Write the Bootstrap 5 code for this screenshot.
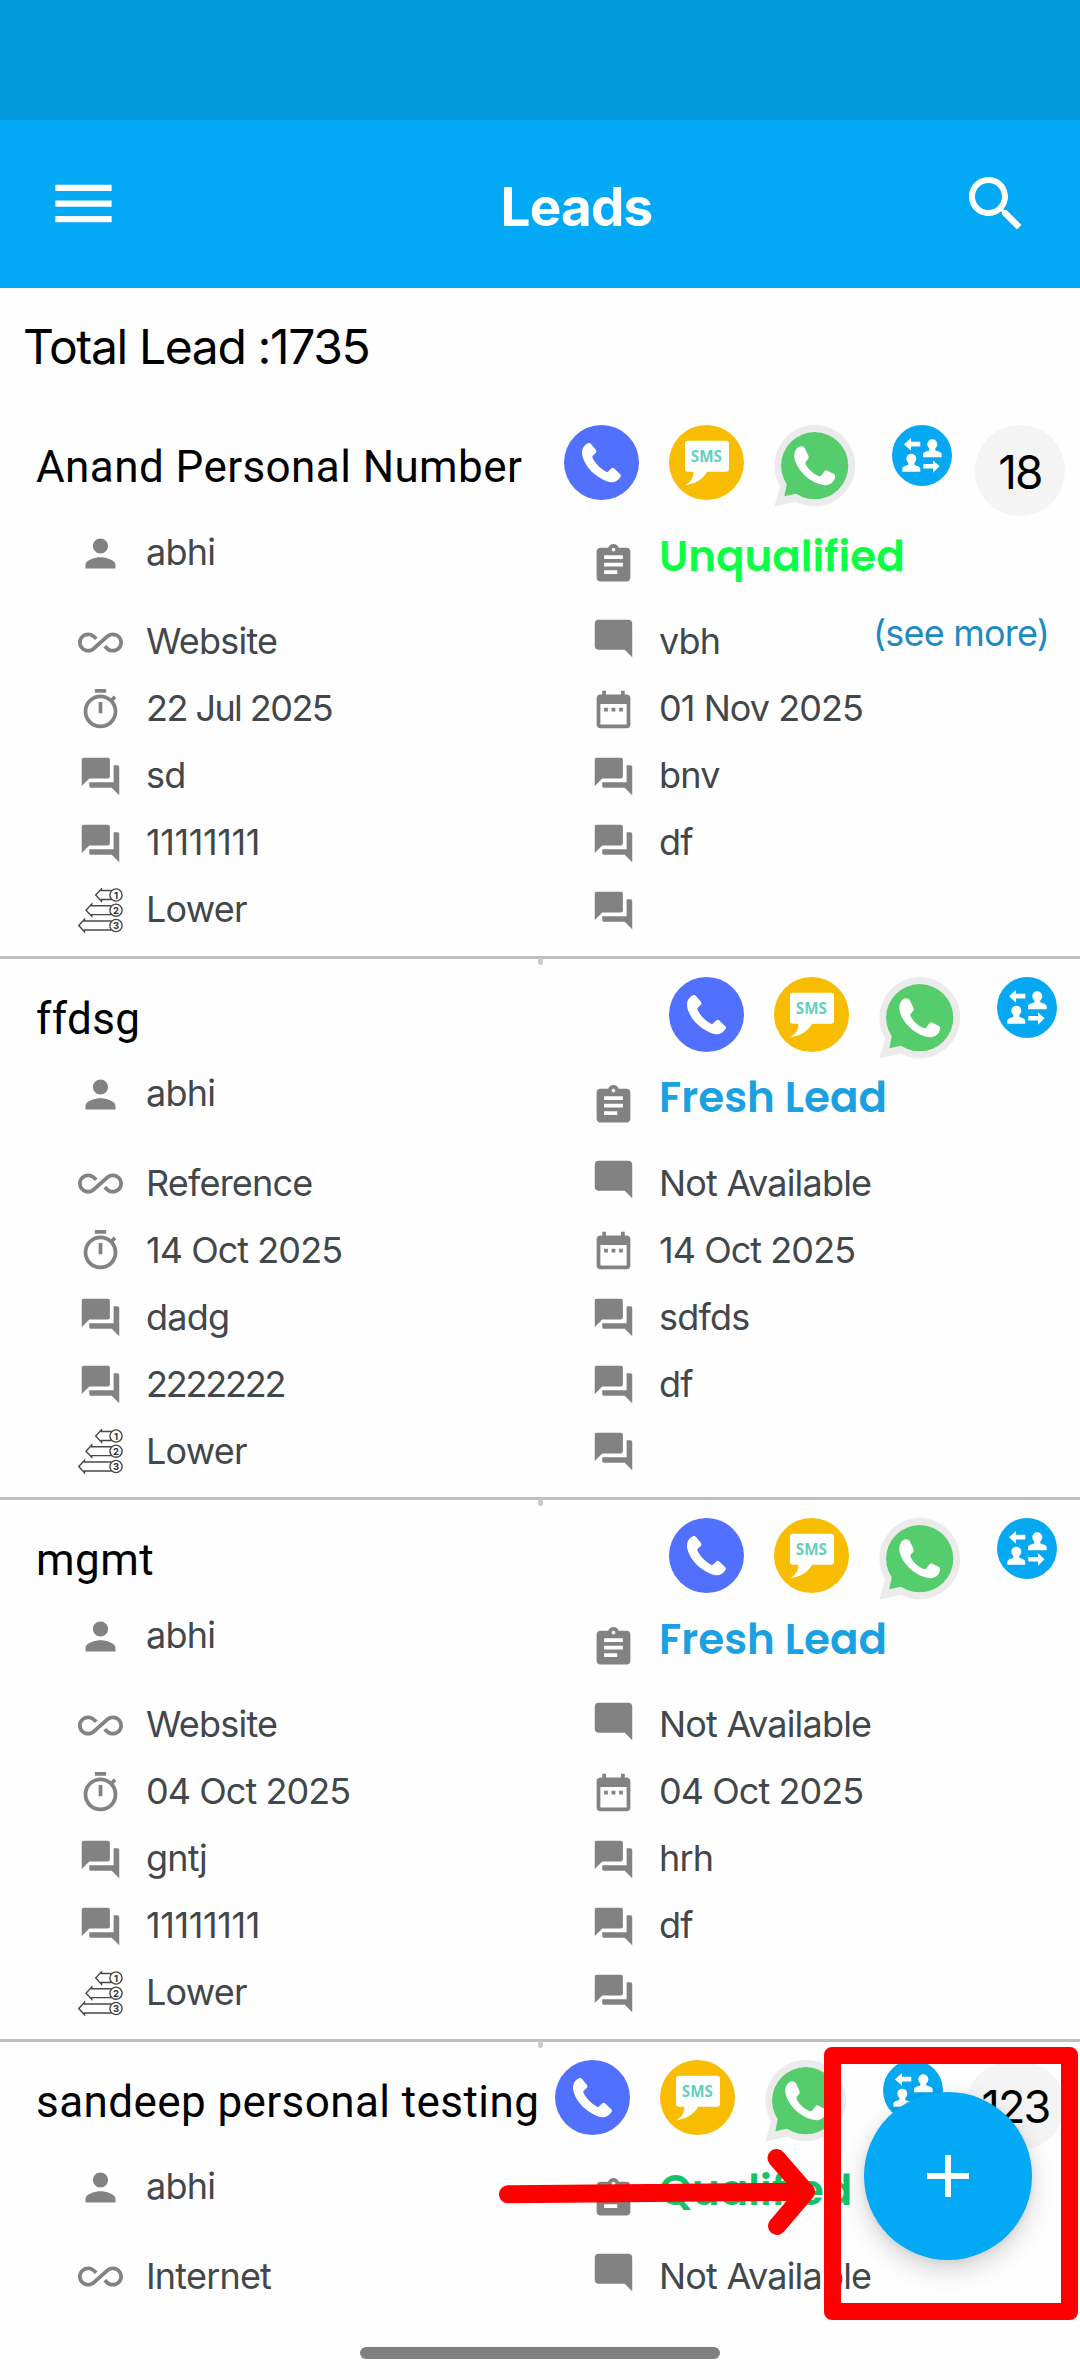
<!DOCTYPE html>
<html lang="en">
<head>
<meta charset="utf-8">
<meta name="viewport" content="width=device-width, initial-scale=1">
<title>Leads</title>
<link href="https://cdn.jsdelivr.net/npm/bootstrap@5.3.0/dist/css/bootstrap.min.css" rel="stylesheet">
<style>
  body { width: 1080px; height: 2380px; overflow: hidden; background: #fefefe; font-family: Inter, "Liberation Sans", sans-serif; }
  .screen { width: 1080px; height: 2380px; }
  .status-strip { height: 120px; background: #0698dc; }
  .app-header { height: 168px; background: #03a9f4; padding: 0 48px 0 46px; border-bottom: 1px solid #1b9fdd; }
  .app-title { font-size: 53px; font-weight: 700; letter-spacing: -.8px; line-height: 64px; margin: 7px 0 0 72px; }
  .total-line { height: 119px; padding: 24px 0 0 23px; font-size: 48px; line-height: 70px; letter-spacing: -1.35px; font-weight: 400; color: #000; }
  .lead-item { padding-top: 18px; height: 541.5px; border-bottom: 3px solid #bfbfbf; }
  .lead-item.counted { height: 551.5px; }
  .lead-item::after { content: ""; position: absolute; left: 538px; bottom: -9px; width: 5px; height: 7px; border-radius: 3px; background: #ccc; }
  .lead-item.last-item { border: 0; }
  .lead-item.last-item::after { display: none; }
  .lead-head { height: 80.5px; padding-left: 36px; }
  .counted .lead-head { height: 90.5px; }
  .lead-name { font-family: Roboto, sans-serif; font-size: 44px; line-height: 52px; letter-spacing: .42px; color: #000; margin-top: 16px; white-space: nowrap; }
  .ic-round { width: 75px; height: 75px; margin-right: 30px; }
  .ic-wa { width: 82px; height: 82px; margin-right: 36px; }
  .ic-swap { width: 60px; height: 61px; margin-right: 23px; }
  .count-pill { width: 90px; height: 91px; margin-right: 15px; background: #f4f4f4; color: #000; font-size: 46px; font-weight: 400; letter-spacing: -1.8px; padding-top: 3px; }
  .count-pill.wide { width: 99px; font-size: 45px; }
  .side-a { padding-left: 78px; }
  .side-b { padding-left: 51px; }
  .info { height: 67px; font-size: 36px; line-height: 66px; letter-spacing: -.8px; font-weight: 400; color: #42474b; gap: 23px; white-space: nowrap; }
  .info.date-info { letter-spacing: -.95px; }
  .info.date-tight { letter-spacing: -1.55px; }
  .info.num-tight { letter-spacing: -2.2px; }
  .info.num-loose { letter-spacing: -.4px; }
  .info svg { width: 45px; height: 45px; color: #828282; fill: currentColor; margin-top: 2px; }
  .info.top-info { height: 92px; line-height: 73px; }
  .top-info svg { margin-top: 15px; }
  .side-b .top-info { line-height: 82px; }
  .side-b .top-info svg { margin-top: 26px; }
  .info.note-info svg { margin: 0 0 6px; }
  .lead-status { font-family: Poppins, Inter, sans-serif; font-size: 42px; font-weight: 600; letter-spacing: 0; }
  .st-unq { color: #0cff45; }
  .st-fresh { color: #1ba1e2; }
  .st-qual { color: #14c268; }
  .see-more { color: #2089bf; margin: 0 31px 17px 0; }
  .fab { left: 864px; top: 2092px; width: 168px; height: 168px; background: #03a9f4; box-shadow: 0 10px 26px rgba(0,0,0,.16), 0 2px 8px rgba(0,0,0,.08); }
  .hint-frame { left: 824px; top: 2047px; width: 254px; height: 273px; border: 17px solid #f00; border-radius: 8px; }
  .hint-arrow { left: 495px; top: 2140px; }
  .home-bar { left: 360px; top: 2347px; width: 360px; height: 12px; background: #808080; border-radius: 6px; }
</style>
</head>
<body>
<svg class="d-none" xmlns="http://www.w3.org/2000/svg">
  <symbol id="i-person" viewBox="0 0 24 24"><path d="M12 12c2.21 0 4-1.79 4-4s-1.79-4-4-4-4 1.79-4 4 1.79 4 4 4zm0 2c-2.67 0-8 1.34-8 4v2h16v-2c0-2.66-5.330-4-8-4z"/></symbol>
  <symbol id="i-loop" viewBox="0 0 24 24"><path d="M18.6 6.620c-1.440 0-2.800.560-3.770 1.530L12 10.660 10.480 12h.01L7.800 14.390c-.640.640-1.490.990-2.400.990-1.870 0-3.390-1.510-3.390-3.380S3.530 8.620 5.400 8.620c.910 0 1.760.350 2.440 1.030l1.130 1 1.510-1.340L9.220 8.200C8.200 7.180 6.840 6.620 5.400 6.620 2.420 6.620 0 9.040 0 12s2.420 5.380 5.400 5.380c1.440 0 2.800-.560 3.770-1.530l2.830-2.500.01.01L13.520 12h-.01l2.690-2.390c.640-.640 1.490-.990 2.400-.990 1.870 0 3.390 1.510 3.390 3.380s-1.520 3.380-3.390 3.380c-.900 0-1.760-.350-2.440-1.030l-1.140-1.010-1.510 1.340 1.270 1.120c1.020 1.010 2.370 1.570 3.820 1.570 2.980 0 5.400-2.410 5.400-5.380s-2.420-5.370-5.400-5.370z"/></symbol>
  <symbol id="i-timer" viewBox="0 0 24 24"><path d="M15 1H9v2h6V1zm-4 13h2V8h-2v6zm8.030-6.610l1.420-1.420c-.430-.510-.900-.990-1.410-1.410l-1.420 1.420C16.070 4.740 14.120 4 12 4c-4.970 0-9 4.030-9 9s4.020 9 9 9 9-4.030 9-9c0-2.120-.740-4.070-1.970-5.610zM12 20c-3.870 0-7-3.130-7-7s3.130-7 7-7 7 3.130 7 7-3.130 7-7 7z"/></symbol>
  <symbol id="i-forum" viewBox="0 0 24 24"><path d="M21 6h-2v9H6v2c0 .550.450 1 1 1h11l4 4V7c0-.550-.450-1-1-1zm-4 6V3c0-.550-.450-1-1-1H3c-.550 0-1 .450-1 1v14l4-4h10c.550 0 1-.450 1-1z"/></symbol>
  <symbol id="i-task" viewBox="0 0 24 24"><path d="M19 3h-4.180C14.400 1.840 13.300 1 12 1c-1.300 0-2.400.840-2.820 2H5c-1.100 0-2 .900-2 2v14c0 1.100.900 2 2 2h14c1.100 0 2-.900 2-2V5c0-1.100-.900-2-2-2zm-7 0c.550 0 1 .450 1 1s-.450 1-1 1-1-.450-1-1 .450-1 1-1zm2 14H7v-2h7v2zm3-4H7v-2h10v2zm0-4H7V7h10v2z"/></symbol>
  <symbol id="i-note" viewBox="0 0 24 24"><path d="M21.990 4c0-1.100-.890-2-1.990-2H4c-1.100 0-2 .900-2 2v12c0 1.100.900 2 2 2h14l4 4-.01-18z"/></symbol>
  <symbol id="i-date" viewBox="0 0 24 24"><path d="M9 11H7v2h2v-2zm4 0h-2v2h2v-2zm4 0h-2v2h2v-2zm2-7h-1V2h-2v2H8V2H6v2H5c-1.110 0-1.990.900-1.990 2L3 20c0 1.100.890 2 2 2h14c1.100 0 2-.900 2-2V6c0-1.100-.900-2-2-2zm0 16H5V9h14v11z"/></symbol>
  <symbol id="i-rank" viewBox="0 0 45 45">
    <g fill="none" stroke="#484848" stroke-width="1.400">
      <path d="M33.500 2.500H23.500V.8L17.700 7l5.800 6.200v-1.700h10M33.500 17.700H13.700V16L8 22.200l5.700 6.100v-1.700h19.800M33.500 33H6.500v-1.800L.8 37.500l5.700 6.300V42h27"/>
      <circle cx="38" cy="7" r="6.100"/><circle cx="38" cy="22.200" r="6.100"/><circle cx="38" cy="37.500" r="6.100"/>
    </g>
    <g fill="#333" font-family="Inter, sans-serif" font-size="9.500" font-weight="700" text-anchor="middle" letter-spacing="0"><text x="38" y="10.500">1</text><text x="38" y="25.700">2</text><text x="38" y="41">3</text></g>
  </symbol>
  <symbol id="i-call" viewBox="0 0 75 75"><circle cx="37.500" cy="37.500" r="37.500" fill="#5170fe"/><path fill="#fff" d="M22.500 19 24.500 18Q25.700 17.500 27 19L32 25Q33 26.500 32 27.700L28.500 31Q28 32 28.800 33.500C31.500 38.500 36 43.500 42 46.800Q43.500 47.300 44.300 46.200L47.500 43.200Q48.700 42.300 50 43.200L56.500 49.500Q57.500 51 56.500 52C53 57.500 48 58.300 42 56C31 51.500 22 42.500 19 33C17 26.500 18 22.500 22.500 19Z"/></symbol>
  <symbol id="i-sms" viewBox="0 0 75 75"><circle cx="37.500" cy="37.500" r="37.500" fill="#f8bd00"/><rect x="16" y="15.700" width="44" height="31" rx="3" fill="#fff"/><path fill="#fff" d="M24.300 46C25 52 22 57 16 60.300 27 58.500 34 54.500 38.500 46Z"/><text x="37.400" y="37" text-anchor="middle" font-family="Open Sans, sans-serif" font-size="15.200" font-weight="700" fill="#62cfc0">SMS</text></symbol>
  <symbol id="i-wa" viewBox="0 0 82 82"><path fill="#ebebeb" d="M41 0A40.600 40.600 0 1 1 22 76.700L.3 81.500 6.200 61.500A40.600 40.600 0 0 1 41 0Z"/><circle cx="40.700" cy="40.700" r="33.600" fill="#55cd6c"/><path fill="#55cd6c" d="M13.200 57 10.300 71.200 25 68Z"/><path fill="#fff" d="M25.500 21.500Q29 20.300 31 23.500L34.500 31Q35.300 33 33.500 34.800L31.500 37Q31 38 32 40C35 45 39 48.500 44.500 51Q46.500 51.600 47.500 50.300L50.500 46.300Q51.500 45 53 45.500L60 49Q61.500 50 61.200 51.500C60.500 57 56 60.500 51 60.200 38 59 26 48.500 21.500 37 19 30 20.500 24 25.500 21.500Z"/></symbol>
  <symbol id="i-swap" viewBox="0 0 60 61"><ellipse cx="30" cy="30.500" rx="30" ry="30.500" fill="#06a8f1"/><g fill="#fff"><path d="M12 19.200 19 13v3.800h9.300v4.700H19v4.200ZM47.500 41.300 41 35.200V39h-9.700v4.600H41v4.200Z"/><circle cx="40.300" cy="19.200" r="5"/><path d="M31 32.300v-2.500c0-3 3-3.300 6.300-4.300V22h6v3.500c3.300 1 6.400 1.300 6.400 4.300v2.500Z"/><circle cx="19.300" cy="33.700" r="5"/><path d="M10.300 46.700v-2.500c0-3 2.700-3.300 6-4.300v-3.400h6v3.400c3.300 1 6 1.300 6 4.300v2.500Z"/></g></symbol>
</svg>

<main class="screen position-relative d-flex flex-column">
  <div class="status-strip flex-shrink-0"></div>
  <header class="app-header flex-shrink-0 d-flex align-items-center justify-content-between text-white">
    <svg width="75" height="75" viewBox="0 0 24 24" fill="#fff"><path d="M3 18h18v-2H3v2zm0-5h18v-2H3v2zm0-7v2h18V6H3z"/></svg>
    <h1 class="app-title">Leads</h1>
    <svg width="72" height="72" viewBox="0 0 24 24" fill="#fff"><path d="M15.500 14h-.790l-.280-.270C15.410 12.590 16 11.110 16 9.500 16 5.910 13.090 3 9.500 3S3 5.910 3 9.500 5.910 16 9.500 16c1.610 0 3.090-.590 4.230-1.570l.270.280v.790l5 4.990L20.490 19l-4.990-5zm-6 0C7.010 14 5 11.990 5 9.500S7.010 5 9.500 5 14 7.010 14 9.500 11.990 14 9.500 14z"/></svg>
  </header>
  <div class="total-line flex-shrink-0">Total Lead :1735</div>

  <article class="lead-item counted position-relative flex-shrink-0">
    <div class="lead-head d-flex align-items-start">
      <div class="lead-name me-auto">Anand Personal Number</div>
      <svg class="ic-round"><use href="#i-call"/></svg><svg class="ic-round"><use href="#i-sms"/></svg><svg class="ic-wa"><use href="#i-wa"/></svg><svg class="ic-swap"><use href="#i-swap"/></svg>
      <span class="count-pill rounded-circle d-flex align-items-center justify-content-center">18</span>
    </div>
    <div class="row g-0">
      <div class="col-6 side-a">
        <div class="info top-info d-flex align-items-start"><svg><use href="#i-person"/></svg>abhi</div>
        <div class="info d-flex align-items-center"><svg><use href="#i-loop"/></svg>Website</div>
        <div class="info date-info date-tight d-flex align-items-center"><svg><use href="#i-timer"/></svg>22 Jul 2025</div>
        <div class="info d-flex align-items-center"><svg><use href="#i-forum"/></svg>sd</div>
        <div class="info num-loose d-flex align-items-center"><svg><use href="#i-forum"/></svg>11111111</div>
        <div class="info d-flex align-items-center"><svg><use href="#i-rank"/></svg>Lower</div>
      </div>
      <div class="col-6 side-b">
        <div class="info top-info d-flex align-items-start"><svg><use href="#i-task"/></svg><span class="lead-status st-unq">Unqualified</span></div>
        <div class="info note-info d-flex align-items-center"><svg><use href="#i-note"/></svg>vbh<span class="see-more ms-auto">(see more)</span></div>
        <div class="info date-info d-flex align-items-center"><svg><use href="#i-date"/></svg>01 Nov 2025</div>
        <div class="info d-flex align-items-center"><svg><use href="#i-forum"/></svg>bnv</div>
        <div class="info d-flex align-items-center"><svg><use href="#i-forum"/></svg>df</div>
        <div class="info d-flex align-items-center"><svg><use href="#i-forum"/></svg></div>
      </div>
    </div>
  </article>

  <article class="lead-item position-relative flex-shrink-0">
    <div class="lead-head d-flex align-items-start">
      <div class="lead-name me-auto">ffdsg</div>
      <svg class="ic-round"><use href="#i-call"/></svg><svg class="ic-round"><use href="#i-sms"/></svg><svg class="ic-wa"><use href="#i-wa"/></svg><svg class="ic-swap"><use href="#i-swap"/></svg>
    </div>
    <div class="row g-0">
      <div class="col-6 side-a">
        <div class="info top-info d-flex align-items-start"><svg><use href="#i-person"/></svg>abhi</div>
        <div class="info d-flex align-items-center"><svg><use href="#i-loop"/></svg>Reference</div>
        <div class="info date-info d-flex align-items-center"><svg><use href="#i-timer"/></svg>14 Oct 2025</div>
        <div class="info d-flex align-items-center"><svg><use href="#i-forum"/></svg>dadg</div>
        <div class="info num-tight d-flex align-items-center"><svg><use href="#i-forum"/></svg>2222222</div>
        <div class="info d-flex align-items-center"><svg><use href="#i-rank"/></svg>Lower</div>
      </div>
      <div class="col-6 side-b">
        <div class="info top-info d-flex align-items-start"><svg><use href="#i-task"/></svg><span class="lead-status st-fresh">Fresh Lead</span></div>
        <div class="info note-info d-flex align-items-center"><svg><use href="#i-note"/></svg>Not Available</div>
        <div class="info date-info d-flex align-items-center"><svg><use href="#i-date"/></svg>14 Oct 2025</div>
        <div class="info d-flex align-items-center"><svg><use href="#i-forum"/></svg>sdfds</div>
        <div class="info d-flex align-items-center"><svg><use href="#i-forum"/></svg>df</div>
        <div class="info d-flex align-items-center"><svg><use href="#i-forum"/></svg></div>
      </div>
    </div>
  </article>

  <article class="lead-item position-relative flex-shrink-0">
    <div class="lead-head d-flex align-items-start">
      <div class="lead-name me-auto">mgmt</div>
      <svg class="ic-round"><use href="#i-call"/></svg><svg class="ic-round"><use href="#i-sms"/></svg><svg class="ic-wa"><use href="#i-wa"/></svg><svg class="ic-swap"><use href="#i-swap"/></svg>
    </div>
    <div class="row g-0">
      <div class="col-6 side-a">
        <div class="info top-info d-flex align-items-start"><svg><use href="#i-person"/></svg>abhi</div>
        <div class="info d-flex align-items-center"><svg><use href="#i-loop"/></svg>Website</div>
        <div class="info date-info d-flex align-items-center"><svg><use href="#i-timer"/></svg>04 Oct 2025</div>
        <div class="info d-flex align-items-center"><svg><use href="#i-forum"/></svg>gntj</div>
        <div class="info num-loose d-flex align-items-center"><svg><use href="#i-forum"/></svg>11111111</div>
        <div class="info d-flex align-items-center"><svg><use href="#i-rank"/></svg>Lower</div>
      </div>
      <div class="col-6 side-b">
        <div class="info top-info d-flex align-items-start"><svg><use href="#i-task"/></svg><span class="lead-status st-fresh">Fresh Lead</span></div>
        <div class="info note-info d-flex align-items-center"><svg><use href="#i-note"/></svg>Not Available</div>
        <div class="info date-info d-flex align-items-center"><svg><use href="#i-date"/></svg>04 Oct 2025</div>
        <div class="info d-flex align-items-center"><svg><use href="#i-forum"/></svg>hrh</div>
        <div class="info d-flex align-items-center"><svg><use href="#i-forum"/></svg>df</div>
        <div class="info d-flex align-items-center"><svg><use href="#i-forum"/></svg></div>
      </div>
    </div>
  </article>

  <article class="lead-item counted last-item position-relative flex-fill">
    <div class="lead-head d-flex align-items-start">
      <div class="lead-name me-auto">sandeep personal testing</div>
      <svg class="ic-round"><use href="#i-call"/></svg><svg class="ic-round"><use href="#i-sms"/></svg><svg class="ic-wa"><use href="#i-wa"/></svg><svg class="ic-swap"><use href="#i-swap"/></svg>
      <span class="count-pill wide rounded-circle d-flex align-items-center justify-content-center">123</span>
    </div>
    <div class="row g-0">
      <div class="col-6 side-a">
        <div class="info top-info d-flex align-items-start"><svg><use href="#i-person"/></svg>abhi</div>
        <div class="info d-flex align-items-center"><svg><use href="#i-loop"/></svg>Internet</div>
      </div>
      <div class="col-6 side-b">
        <div class="info top-info d-flex align-items-start"><svg><use href="#i-task"/></svg><span class="lead-status st-qual">Qualified</span></div>
        <div class="info note-info d-flex align-items-center"><svg><use href="#i-note"/></svg>Not Available</div>
      </div>
    </div>
  </article>

  <button class="fab btn border-0 p-0 rounded-circle position-absolute d-flex align-items-center justify-content-center" aria-label="Add lead">
    <svg width="42" height="42" viewBox="0 0 42 42"><path d="M21 0v42M0 21h42" stroke="#fff" stroke-width="6"/></svg>
  </button>
  <div class="hint-frame position-absolute"></div>
  <svg class="hint-arrow position-absolute" width="330" height="105" viewBox="0 0 330 105" fill="none" stroke="#f00" stroke-width="18" stroke-linecap="round" stroke-linejoin="round"><path d="M13 54.300 311 51.700M281.500 18 311 52 282 86"/></svg>
  <div class="home-bar position-absolute"></div>
</main>
<script src="https://cdn.jsdelivr.net/npm/bootstrap@5.3.0/dist/js/bootstrap.bundle.min.js"></script>
</body>
</html>
